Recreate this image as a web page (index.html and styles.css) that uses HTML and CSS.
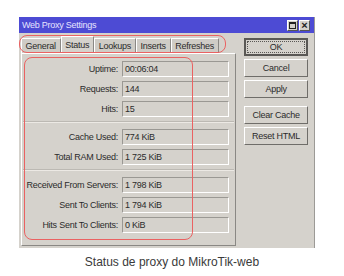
FILE: index.html
```html
<!DOCTYPE html>
<html>
	<head>
		<title>Web Proxy Settings</title>
		<link rel="stylesheet" href="styles.css">
	</head>
	<body>
		<div class="page">
			<div class="window">
				<div class="titleBar">
					<span class="titleText">Web Proxy Settings</span>
					<div class="titleButtons">
						<span class="titleButton"><span class="maxIcon"></span></span>
						<span class="titleButton closeIcon">&times;</span>
					</div>
				</div>

				<div class="windowBody">
					<div class="sectionLeft">
						<div class="tabs">
							<span class="tab">General</span>
							<span class="tab active">Status</span>
							<span class="tab">Lookups</span>
							<span class="tab">Inserts</span>
							<span class="tab">Refreshes</span>
						</div>
						<div class="panel">
							<div class="group">
								<span class="label">Uptime:</span><span class="field">00:06:04</span>
								<span class="label">Requests:</span><span class="field">144</span>
								<span class="label">Hits:</span><span class="field">15</span>
							</div>
							<div class="separator"></div>
							<div class="group">
								<span class="label">Cache Used:</span><span class="field">774 KiB</span>
								<span class="label">Total RAM Used:</span><span class="field">1 725 KiB</span>
							</div>
							<div class="separator"></div>
							<div class="group">
								<span class="label">Received From Servers:</span><span class="field">1 798 KiB</span>
								<span class="label">Sent To Clients:</span><span class="field">1 794 KiB</span>
								<span class="label">Hits Sent To Clients:</span><span class="field">0 KiB</span>
							</div>
						</div>
					</div>

					<div class="sectionRight">
						<button class="winButton default"><span>OK</span></button>
						<button class="winButton">Cancel</button>
						<button class="winButton">Apply</button>
						<button class="winButton spaced">Clear Cache</button>
						<button class="winButton">Reset HTML</button>
					</div>
				</div>

				<!-- red marker outlines drawn over the screenshot -->
				<div class="marker markerTabs"></div>
				<div class="marker markerFields"></div>
			</div>

			<p class="caption">Status de proxy do MikroTik-web</p>
		</div>
	</body>
</html>
```

FILE: styles.css
```css
body {
	margin: 0;
	background-color: #ffffff;
	font-family: "Liberation Sans", Arial, sans-serif;
}

.page {
	padding: 17px 0 0 19px;
}

.window {
	position: relative;
	width: 296px;
	height: 231px;
	box-sizing: border-box;
	background-color: #d5d2cc;
	border-right: 1px solid #9c9a96;
	display: flex;
	flex-direction: column;
	font-size: 9px;
	letter-spacing: -0.25px;
	white-space: nowrap;
	color: #2b2b2b;
}

.titleBar {
	height: 16px;
	background-color: #4d4bd4;
	display: flex;
	align-items: center;
	justify-content: space-between;
	padding: 0 4px 0 3px;
}

.titleText {
	color: #e6e4ff;
	font-size: 9px;
}

.titleButtons {
	display: flex;
	gap: 1px;
}

.titleButton {
	width: 11px;
	height: 11px;
	box-sizing: border-box;
	background-color: #d5d2cc;
	border: 1px solid #ffffff;
	border-right-color: #555555;
	border-bottom-color: #555555;
	display: flex;
	align-items: center;
	justify-content: center;
}

.maxIcon {
	width: 5px;
	height: 4px;
	border: 1px solid #222222;
	border-top-width: 2px;
}

.closeIcon {
	font-size: 11px;
	font-weight: bold;
	line-height: 9px;
	letter-spacing: 0;
	color: #222222;
}

.windowBody {
	flex: 1;
	display: flex;
	gap: 8px;
	padding: 3px 6px 2px 2px;
}

.sectionLeft {
	width: 216px;
	display: flex;
	flex-direction: column;
}

.tabs {
	display: flex;
	align-items: flex-end;
	height: 17px;
}

.tab {
	height: 14px;
	line-height: 14px;
	padding: 0 4px 0 3.5px;
	border: 1px solid #ffffff;
	border-bottom: none;
	border-right-color: #8a8884;
	background-color: #cfccc6;
}

.tab.active {
	height: 16px;
	line-height: 16px;
	background-color: #d5d2cc;
}

.panel {
	flex: 1;
	border: 1px solid #ffffff;
	border-right-color: #8a8884;
	border-bottom-color: #8a8884;
	padding: 7px 3px 0 3px;
}

.group {
	display: grid;
	grid-template-columns: 93px 107px;
	column-gap: 4px;
	row-gap: 4px;
}

.label {
	text-align: right;
	line-height: 16px;
}

.field {
	height: 16px;
	line-height: 14px;
	box-sizing: border-box;
	padding-left: 2px;
	border: 1px solid #9a9893;
	border-right-color: #ffffff;
	border-bottom-color: #ffffff;
}

.separator {
	margin: 4px -2px 6px -2px;
	border-top: 1px solid #bcb9b3;
	border-bottom: 1px solid #ece9e4;
}

.sectionRight {
	width: 64px;
	display: flex;
	flex-direction: column;
	gap: 3px;
	padding-top: 2px;
}

.winButton {
	height: 18px;
	padding: 0;
	font-family: "Liberation Sans", Arial, sans-serif;
	font-size: 9px;
	letter-spacing: -0.25px;
	color: #2b2b2b;
	background-color: #d5d2cc;
	border: 1px solid #ffffff;
	border-right-color: #6f6d69;
	border-bottom-color: #6f6d69;
}

.winButton.default {
	border: 2px solid #5a5855;
	display: flex;
	padding: 1px;
}

.winButton.default span {
	flex: 1;
	border: 1px dotted #5a5855;
	line-height: 10px;
}

.winButton.spaced {
	margin-top: 5px;
}

.marker {
	position: absolute;
	border: 1.5px solid #ea6262;
	border-radius: 8px;
}

.markerTabs {
	left: 0;
	top: 18px;
	width: 205px;
	height: 16px;
}

.markerFields {
	left: 5px;
	top: 40px;
	width: 167px;
	height: 181px;
}

.caption {
	margin: 7px 0 0 0;
	width: 306px;
	text-align: center;
	font-size: 12px;
	color: #3a3a3a;
}
```
